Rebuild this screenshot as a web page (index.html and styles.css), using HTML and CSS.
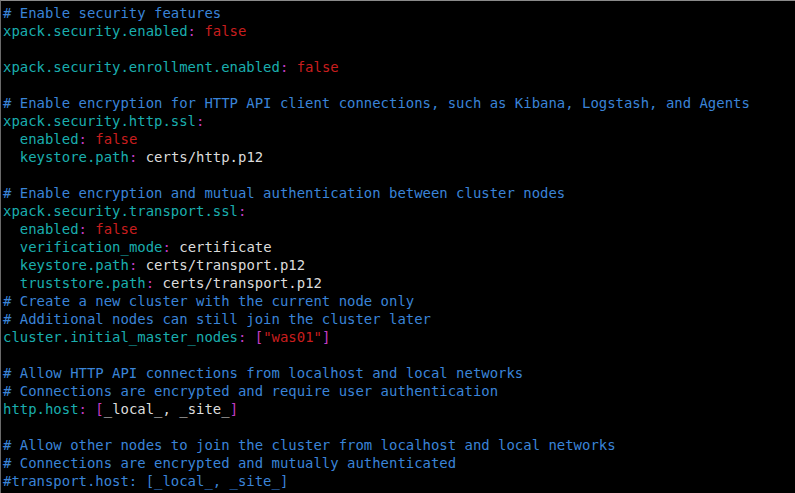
FILE: index.html
```html
<!DOCTYPE html>
<html>
<head>
<meta charset="utf-8">
<link rel="stylesheet" href="styles.css">
</head>
<body>
<pre class="term"><span class="c"># Enable security features</span>
<span class="k">xpack.security.enabled</span><span class="p">:</span> <span class="f">false</span>

<span class="k">xpack.security.enrollment.enabled</span><span class="p">:</span> <span class="f">false</span>

<span class="c"># Enable encryption for HTTP API client connections, such as Kibana, Logstash, and Agents</span>
<span class="k">xpack.security.http.ssl</span><span class="p">:</span>
  <span class="k">enabled</span><span class="p">:</span> <span class="f">false</span>
  <span class="k">keystore.path</span><span class="p">:</span> <span class="v">certs/http.p12</span>

<span class="c"># Enable encryption and mutual authentication between cluster nodes</span>
<span class="k">xpack.security.transport.ssl</span><span class="p">:</span>
  <span class="k">enabled</span><span class="p">:</span> <span class="f">false</span>
  <span class="k">verification_mode</span><span class="p">:</span> <span class="v">certificate</span>
  <span class="k">keystore.path</span><span class="p">:</span> <span class="v">certs/transport.p12</span>
  <span class="k">truststore.path</span><span class="p">:</span> <span class="v">certs/transport.p12</span>
<span class="c"># Create a new cluster with the current node only</span>
<span class="c"># Additional nodes can still join the cluster later</span>
<span class="k">cluster.initial_master_nodes</span><span class="p">:</span> <span class="p">[</span><span class="f">"was01"</span><span class="p">]</span>

<span class="c"># Allow HTTP API connections from localhost and local networks</span>
<span class="c"># Connections are encrypted and require user authentication</span>
<span class="k">http.host</span><span class="p">:</span> <span class="p">[</span><span class="v">_local_, _site_</span><span class="p">]</span>

<span class="c"># Allow other nodes to join the cluster from localhost and local networks</span>
<span class="c"># Connections are encrypted and mutually authenticated</span>
<span class="c">#transport.host: [_local_, _site_]</span></pre>
</body>
</html>
```

FILE: styles.css
```css
html, body {
  margin: 0;
  padding: 0;
  background: #000;
}
body {
  width: 795px;
  height: 493px;
  overflow: hidden;
}
.term {
  margin: 0;
  box-sizing: border-box;
  width: 795px;
  height: 493px;
  background: #000;
  border-top: 1px solid #8a8a8a;
  border-left: 1px solid #6a6a6a;
  padding: 3px 0 0 2px;
  font-family: "DejaVu Sans Mono", monospace;
  font-size: 13.94px;
  line-height: 18px;
  color: #d8d8d8;
  white-space: pre;
}
.c { color: #3a84d8; }
.k { color: #1aaeae; }
.p { color: #c43cc4; }
.f { color: #c81e1e; }
.v { color: #dcdcdc; }
```
